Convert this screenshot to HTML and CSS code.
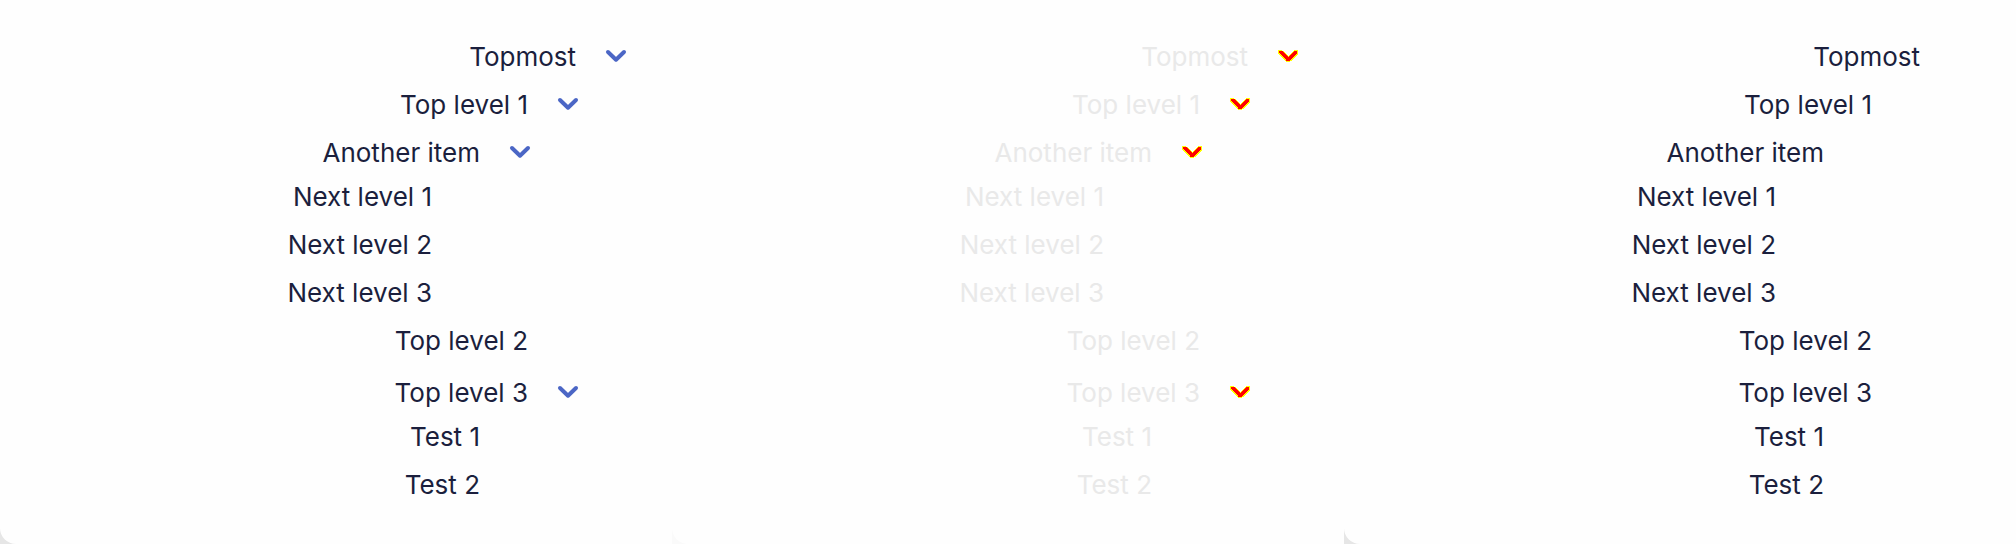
FILE: index.html
```
<!DOCTYPE html>
<html lang="en">
<head>
<meta charset="utf-8">
<title>Tree comparison</title>
<link rel="stylesheet" href="styles.css">
</head>
<body>
<main class="panels"></main>
<script src="tree.js"></script>
</body>
</html>
```
FILE: tree.js
```
const items = [
  { label: "Topmost", children: [
    { label: "Top level 1", children: [
      { label: "Another item", children: [
        { label: "Next level 1" },
        { label: "Next level 2" },
        { label: "Next level 3" }
      ] }
    ] },
    { label: "Top level 2" },
    { label: "Top level 3", children: [
      { label: "Test 1" },
      { label: "Test 2" }
    ] }
  ] }
];

const icons = {
  blue: `<svg class="chevron" viewBox="0 0 32 32" aria-hidden="true"><path d="M8 11 16 18.7 24 11"/></svg>`,
  marked: `<svg class="chevron" viewBox="0 0 32 32" aria-hidden="true" shape-rendering="crispEdges">
    <path class="halo" d="M6 9H10V10H11L16 15 21 10H22V9H26V13L19 20H18V21H14V20H13L6 13Z"/>
    <path class="core" d="M7 10H10L16 16 22 10H25V12L18 19V20H14V19L7 12Z"/></svg>`
};

function renderList(nodes, icon) {
  const rows = nodes.map(({ label, children }) => {
    const toggle = children && icons[icon]
      ? `<button class="toggle" type="button" aria-expanded="true" aria-label="Collapse ${label}">${icons[icon]}</button>`
      : '<span class="toggle"></span>';
    return `<li><div class="row${children ? " row-parent" : ""}"><span>${label}</span>${toggle}</div>` +
      (children ? renderList(children, icon) : "") + "</li>";
  });
  return `<ul class="tree">${rows.join("")}</ul>`;
}

document.querySelector(".panels").innerHTML = [
  ["before", "blue"],
  ["difference", "marked"],
  ["after", "none"]
].map(([name, icon]) =>
  `<section class="panel ${name}"><div class="card">${renderList(items, icon)}</div></section>`
).join("");
```
FILE: styles.css
```
* {
  box-sizing: border-box;
}

body {
  margin: 0;
  font-family: Inter, "Liberation Sans", sans-serif;
  font-size: 26px;
  line-height: 36px;
  color: #1b1f3d;
  background: #fefefe;
}

.panels {
  display: grid;
  grid-template-columns: repeat(3, 1fr);
  min-height: 100vh;
}

.panel {
  display: grid;
  background: #e6e6e6;
}

.card {
  padding: 33px 40px 24px 0;
  border-bottom-left-radius: 16px;
  background: #fefefe;
}

.tree {
  margin: 0;
  padding: 0;
  list-style: none;
}

.tree .tree {
  padding-right: 48px;
}

.row {
  display: flex;
  align-items: center;
  justify-content: flex-end;
  gap: 24px;
  height: 48px;
  padding-bottom: 8px;
}

.row-parent {
  padding-bottom: 0;
}

.toggle {
  flex: none;
  width: 32px;
  height: 32px;
  padding: 0;
  border: 0;
  background: none;
}

.chevron {
  display: block;
  width: 32px;
  height: 32px;
  fill: none;
  stroke: #4b66c5;
  stroke-width: 4;
  stroke-linecap: round;
  stroke-linejoin: round;
}

.difference {
  color: #e9e9e9;
  background: #fafafa;
}

.halo,
.core {
  stroke: none;
}

.halo {
  fill: #ffff00;
}

.core {
  fill: #ff0000;
}
```
